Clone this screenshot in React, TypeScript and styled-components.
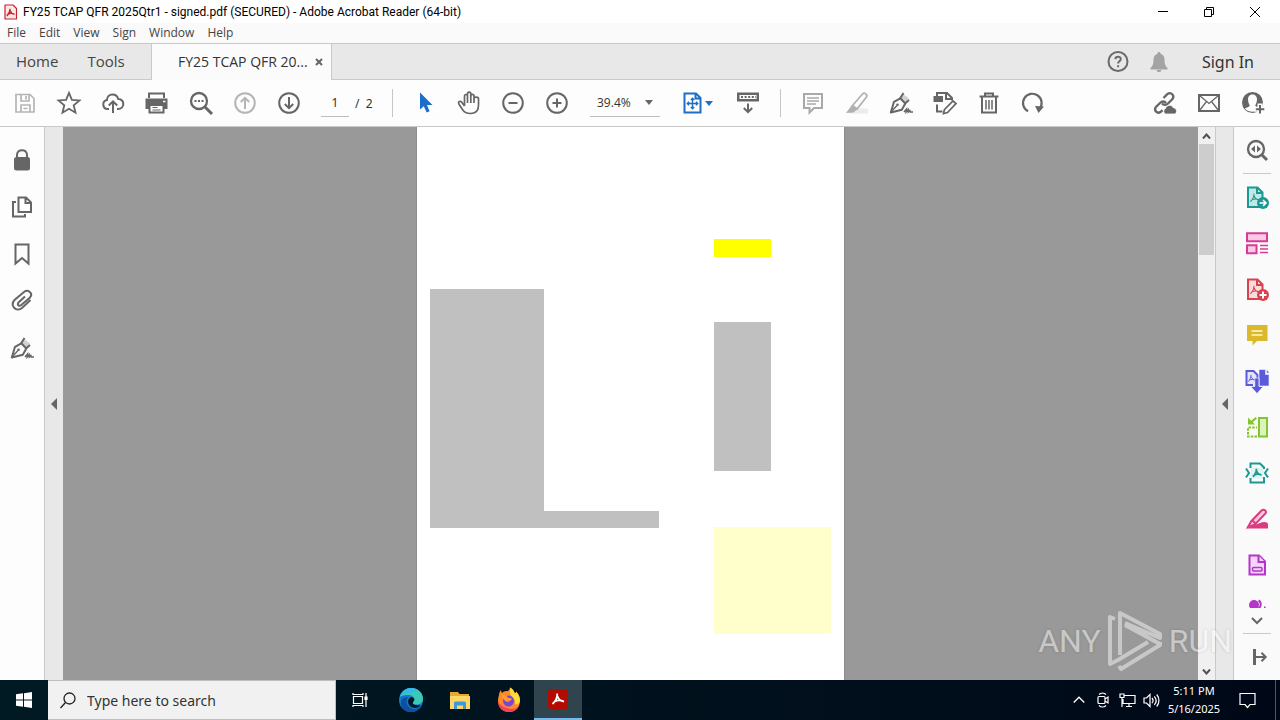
import React from "react";
import styled, { createGlobalStyle, css } from "styled-components";

const Global = createGlobalStyle`
  *, *::before, *::after { box-sizing: border-box; }
  html, body { margin: 0; height: 100%; overflow: hidden; }
  #root { height: 100%; }
  body { font-family: "Noto Sans", "Open Sans", sans-serif; font-size: 11px; color: #444; background: #fff; }
  button, input, select { font: inherit; color: inherit; margin: 0; padding: 0; border: 0; border-radius: 0; background: none; }
`;

const Shell = styled.div`
  display: flex;
  flex-direction: column;
  min-height: 100vh;
  height: 100%;
`;

const TitleBar = styled.header`
  display: flex;
  align-items: center;
  height: 23px;
  padding-left: 3px;
  background: #fff;
  color: #000;
`;
const WindowTitle = styled.h1`
  flex: 1;
  margin: 0 0 0 5px;
  font-family: Roboto, "Open Sans", sans-serif;
  font-size: 12px;
  font-weight: 400;
  line-height: 20px;
  white-space: nowrap;
`;
const WindowButton = styled.button`
  display: grid;
  place-items: center;
  width: 46px;
  height: 22px;
`;
const WindowButtons = styled.div`
  display: flex;
  margin-right: 2px;
`;

const MenuBar = styled.nav`
  display: flex;
  height: 21px;
  gap: 13px;
  padding-left: 7px;
  background: #fafafa;
  border-bottom: 1px solid #c9c9c9;
`;
const MenuItem = styled.button`
  font-family: "Open Sans", sans-serif;
  font-size: 12px;
  line-height: 20px;
`;

const TabBar = styled.div`
  display: flex;
  height: 36px;
  background: #e8e8e8;
  border-bottom: 1px solid #c9c9c9;
  font-family: "Open Sans", sans-serif;
  font-size: 14px;
`;
const HomeTabs = styled.div`
  display: flex;
  gap: 29px;
  width: 151px;
  padding-left: 16px;
`;
const PlainTab = styled.button`
  font-size: 15px;
  line-height: 35px;
`;
const DocTab = styled.div`
  display: flex;
  align-items: center;
  justify-content: space-between;
  width: 181px;
  height: 36px;
  padding: 0 8px 1px 26px;
  background: #fbfbfb;
  border: solid #c9c9c9;
  border-width: 0 1px;
  color: #333;
`;
const TabClose = styled.button`
  display: grid;
  place-items: center;
`;
const Account = styled.div`
  display: flex;
  align-items: center;
  gap: 18px;
  margin-left: auto;
  padding-right: 26px;
  color: #6a6a6a;
`;
const SignIn = styled.button`
  margin-left: 16px;
  color: #333;
  font-family: "Noto Sans", sans-serif;
  font-size: 16px;
`;

const Toolbar = styled.div`
  display: flex;
  align-items: center;
  height: 47px;
  padding: 0 5px 0 3px;
  background: #fdfdfd;
  border-bottom: 1px solid #c9c9c9;
  color: #666;
`;
const ToolGroup = styled.div<{ $end?: boolean }>`
  display: flex;
  align-items: center;
  ${(p) => p.$end && css`margin-left: auto;`}
`;
const ToolButton = styled.button<{ $tone?: string; $wide?: boolean }>`
  display: flex;
  align-items: center;
  justify-content: center;
  width: ${(p) => (p.$wide ? "52px" : "44px")};
  padding-right: ${(p) => (p.$wide ? "6px" : "0")};
  height: 44px;
  color: ${(p) => p.$tone ?? "#666"};
`;
const Divider = styled.span`
  width: 1px;
  height: 28px;
  margin: 0 10px;
  background: #c6c6c6;
`;
const PageField = styled.label`
  display: flex;
  align-items: center;
  gap: 6px;
  width: 61px;
  margin-left: 10px;
  color: #333;
  font-size: 12px;
`;
const PageInput = styled.input`
  width: 28px;
  height: 28px;
  text-align: center;
  border-bottom: 1px solid #bdbdbd;
`;
const ZoomField = styled.div`
  display: flex;
  align-items: center;
  width: 70px;
  height: 28px;
  margin: 0 14px 0 11px;
  border-bottom: 1px solid #bdbdbd;
  color: #333;
`;
const ZoomSelect = styled.select`
  flex: 1;
  height: 27px;
  padding-left: 7px;
  appearance: none;
  font-family: "Open Sans", sans-serif;
  font-size: 12px;
  outline: none;
`;

const Workspace = styled.main`
  display: flex;
  flex: 1;
  min-height: 0;
  position: relative;
`;
const LeftRail = styled.nav`
  display: flex;
  flex-direction: column;
  width: 45px;
  padding-top: 9px;
  background: #fdfdfd;
  border-right: 1px solid #c9c9c9;
`;
const LeftButton = styled.button`
  display: grid;
  place-items: center;
  height: 47px;
  color: #666;
`;
const Collapse = styled.button<{ $right?: boolean }>`
  display: grid;
  place-items: center;
  width: ${(p) => (p.$right ? "19px" : "18px")};
  background: #e8e8e8;
  ${(p) => p.$right && css`border: solid #c9c9c9; border-width: 0 1px;`}
`;
const Viewer = styled.section`
  flex: 1;
  display: flex;
  justify-content: center;
  overflow: hidden;
  background: #999;
`;
const Page = styled.article`
  display: flex;
  justify-content: space-between;
  width: 427px;
  padding: 0 13px;
  background: #fff;
  outline: 1px solid #8d8d8d;
`;
const FieldColumn = styled.div<{ $top: number }>`
  display: flex;
  flex-direction: column;
  padding-top: ${(p) => p.$top}px;
`;
const Field = styled.div<{ $w: number; $h: number; $fill: string; $gap?: number }>`
  width: ${(p) => p.$w}px;
  height: ${(p) => p.$h}px;
  margin-top: ${(p) => p.$gap ?? 0}px;
  background: ${(p) => p.$fill};
`;
const ScrollBar = styled.div`
  display: flex;
  flex-direction: column;
  width: 17px;
  background: #f0f0f0;
`;
const ScrollButton = styled.button<{ $end?: boolean }>`
  display: grid;
  place-items: center;
  height: 17px;
  color: #505050;
  ${(p) => p.$end && css`margin-top: auto;`}
`;
const ScrollThumb = styled.div`
  width: 15px;
  height: 111px;
  margin-left: 1px;
  background: #cdcdcd;
`;
const RightRail = styled.nav`
  display: flex;
  flex-direction: column;
  align-items: center;
  width: 46px;
  background: #fafafa;
  color: #666;
`;
const RightButton = styled.button<{ $h?: number }>`
  display: flex;
  align-items: flex-start;
  justify-content: center;
  width: 46px;
  height: ${(p) => p.$h ?? 46}px;
  padding-top: ${(p) => (p.$h ? 0 : 9)}px;
  overflow: hidden;
  flex: none;
`;
const RailLine = styled.span`
  width: 28px;
  height: 1px;
  background: #c9c9c9;
`;

const Watermark = styled.div`
  position: absolute;
  right: 48px;
  bottom: 8px;
  display: flex;
  align-items: center;
  gap: 6px;
  pointer-events: none;
  color: #fff;
  opacity: 0.46;
  font-family: Roboto, sans-serif;
  font-size: 32px;
  font-weight: 400;
  line-height: 62px;
  text-shadow: 0 0 3px rgba(0, 0, 0, 0.35);
`;

const TaskBar = styled.footer`
  display: flex;
  height: 40px;
  background: linear-gradient(90deg, #001a24, #00101c 60%, #000818);
  color: #fff;
`;
const TaskButton = styled.button<{ $active?: boolean; $gap?: number }>`
  display: grid;
  place-items: center;
  width: 48px;
  height: 40px;
  margin-right: ${(p) => p.$gap ?? 0}px;
  ${(p) => p.$active && css`background: #2f444c; border-bottom: 2px solid #76b9ed;`}
`;
const Search = styled.label`
  display: flex;
  align-items: center;
  gap: 11px;
  width: 288px;
  padding-left: 12px;
  background: #f1f1f1;
  border: 1px solid #bfbfbf;
  border-left: 0;
  color: #222;
`;
const SearchInput = styled.input`
  flex: 1;
  min-width: 0;
  font-size: 14px;
  outline: none;
  &::placeholder { color: #333; opacity: 1; }
`;
const Tray = styled.div`
  display: flex;
  margin-left: auto;
`;
const TrayButton = styled.button<{ $w?: number }>`
  display: grid;
  place-items: center;
  width: ${(p) => p.$w ?? 24}px;
  padding-right: ${(p) => (p.$w ? "6px" : "0")};
`;
const Clock = styled.time`
  width: 62px;
  text-align: center;
  font-size: 11px;
  line-height: 18px;
  padding-top: 2px;
`;
const ShowDesktop = styled.button`
  width: 5px;
  border-left: 1px solid #4c5964;
`;

type IconProps = { children: React.ReactNode; size?: number; box?: string };
const Icon = ({ children, size = 28, box }: IconProps) => (
  <svg width={size} height={size} viewBox={box ?? `0 0 ${size} ${size}`} fill="none" stroke="currentColor" strokeWidth="2" aria-hidden="true">
    {children}
  </svg>
);

const Swirl = ({ x, y, s = 1, w = 1.2 }: { x: number; y: number; s?: number; w?: number }) => (
  <path
    transform={`translate(${x} ${y}) scale(${s})`}
    d="M-.6-4.600C-.6-1.500-1.800 1.800-4.600 4.200M-.5-2.500C.3 0 2.200 1.800 5 2.200M-3 2C-.5 1 2.500.8 5 2.200"
    strokeWidth={w}
  />
);

const Nib = () => (
  <>
    <path d="M15.500 4.500l6.500 5-3.500 4.500-5-5z" fill="#d2d2d2" stroke="none" />
    <path d="M3.800 23.500L7 12.800l6.300-3.500 5 5.200-3.500 6.300z" strokeLinejoin="round" />
    <path d="M4 23l6-6.500" strokeWidth="1.400" />
    <circle cx="10.500" cy="15.800" r="1.300" fill="currentColor" stroke="none" />
    <path d="M13 9.500l3.500-5.500M18 14.500l4-3.500" />
    <path d="M17 23l2.500-3-.3 3 2-2.300.1 2.300 1.500-1.600.4 1.600H26" strokeWidth="1.500" />
  </>
);

const DownCaret = () => (
  <svg width="8" height="5" viewBox="0 0 8 5" aria-hidden="true"><path d="M0 0h8L4 5z" fill="currentColor" /></svg>
);

const Tip = ({ label, children, ...rest }: { label: string; children: React.ReactNode; $tone?: string; $wide?: boolean }) => (
  <ToolButton aria-label={label} {...rest}>{children}</ToolButton>
);

const pageShape = "M5 4.500h9.500l5 5V24H5z";

export default function App() {
  return (
    <Shell>
      <Global />
      <TitleBar>
        <svg width="15" height="16" viewBox="0 0 15 16" fill="none" aria-hidden="true">
          <path d="M2 1h8l3.500 3.500V15H2z" fill="#fde8e8" stroke="#c9242b" strokeWidth="1.200" strokeLinejoin="round" />
          <g stroke="#c9242b"><Swirl x={7.500} y={8.500} s={0.8} w={1.700} /></g>
        </svg>
        <WindowTitle>FY25 TCAP QFR 2025Qtr1 - signed.pdf (SECURED) - Adobe Acrobat Reader (64-bit)</WindowTitle>
        <WindowButtons>
          <WindowButton aria-label="Minimize">
            <svg width="10" height="10"><path d="M0 4.500h10" stroke="#000" /></svg>
          </WindowButton>
          <WindowButton aria-label="Restore">
            <svg width="10" height="10" fill="none" stroke="#000"><path d="M.5 2.500h7v7h-7zM2.500 2.500v-2h7v7h-2" /></svg>
          </WindowButton>
          <WindowButton aria-label="Close">
            <svg width="10" height="10" stroke="#000"><path d="M0 0l10 10M10 0L0 10" /></svg>
          </WindowButton>
        </WindowButtons>
      </TitleBar>

      <MenuBar>
        {["File", "Edit", "View", "Sign", "Window", "Help"].map((m) => <MenuItem key={m}>{m}</MenuItem>)}
      </MenuBar>

      <TabBar>
        <HomeTabs>
          <PlainTab>Home</PlainTab>
          <PlainTab>Tools</PlainTab>
        </HomeTabs>
        <DocTab>
          FY25 TCAP QFR 20...
          <TabClose aria-label="Close tab">
            <svg width="8" height="8" stroke="#666" strokeWidth="2"><path d="M1 1l6 6M7 1L1 7" /></svg>
          </TabClose>
        </DocTab>
        <Account>
          <TabClose aria-label="Help">
            <Icon>
              <circle cx="14" cy="13.500" r="9.500" />
              <path d="M11.300 11.100c.2-3.300 5.600-3.200 5.500 0 0 2-2.700 2.200-2.700 4.300M14.100 17.300v2" />
            </Icon>
          </TabClose>
          <TabClose aria-label="Notifications">
            <svg width="18" height="22" viewBox="0 0 18 22" fill="#a3a3a3" aria-hidden="true">
              <path d="M9 1c1 0 1.500.6 1.500 1.700C13.500 3.500 14.500 6 14.500 9c0 4 .8 6 3 8v1.500H.5V17c2.200-2 3-4 3-8 0-3 1-5.500 4-6.300C7.500 1.600 8 1 9 1zM6.500 19h5c-.3 1.400-1.200 2-2.500 2s-2.200-.6-2.500-2z" />
            </svg>
          </TabClose>
          <SignIn>Sign In</SignIn>
        </Account>
      </TabBar>

      <Toolbar>
        <ToolGroup>
          <Tip label="Save" $tone="#b5b5b5">
            <Icon><path d="M5 5.500h14l4 4V23H5zM10 5.500V12h8V5.500M10 23v-7h9v7M15 7v3.500M12.500 19.500h4" strokeWidth="1.700" /></Icon>
          </Tip>
          <Tip label="Star">
            <Icon><path d="M14 3.800l2.900 7 7.600.6-5.800 4.900 1.800 7.400-6.500-4-6.500 4 1.800-7.400-5.800-4.900 7.600-.6z" strokeWidth="1.800" /></Icon>
          </Tip>
          <Tip label="Upload">
            <Icon><path d="M10 20H8.500a4.500 4.500 0 0 1-.6-8.900C8 7.500 10.500 5.500 13.500 5.500c3 0 5 1.800 5.600 4.400 3.200.2 5.200 2.200 5.200 5 0 3-2.200 5.100-5.200 5.100H18M14 24V12.500M9.800 16.500l4.200-4.200 4.200 4.200" /></Icon>
          </Tip>
          <Tip label="Print">
            <Icon>
              <path d="M6 9V4.500h15V9" />
              <path d="M2.500 9.500h22V20h-22z" fill="currentColor" stroke="none" />
              <path d="M6.500 16h14v7.500h-14z" fill="#fdfdfd" />
              <path d="M9.500 18.500h5M9.500 21h8" strokeWidth="1.200" />
              <path d="M20 12.500h2.500" stroke="#fdfdfd" strokeWidth="1.500" />
            </Icon>
          </Tip>
          <Tip label="Find">
            <Icon>
              <circle cx="12" cy="12" r="8" strokeWidth="2.300" /><path d="M18 18l7 7" strokeWidth="3" />
              <path d="M7.500 12h2M11 12h2M14.500 12h2" />
            </Icon>
          </Tip>
          <Tip label="Previous page" $tone="#b5b5b5">
            <Icon><circle cx="14" cy="14" r="9.800" /><path d="M14 20V9M9.800 13L14 8.800l4.200 4.200" /></Icon>
          </Tip>
          <Tip label="Next page">
            <Icon><circle cx="14" cy="14" r="9.800" /><path d="M14 8v11M9.800 15l4.200 4.200 4.200-4.200" /></Icon>
          </Tip>
        </ToolGroup>
        <PageField>
          <PageInput aria-label="Page number" defaultValue="1" />
          <span>/&nbsp; 2</span>
        </PageField>
        <Divider />
        <ToolGroup>
          <Tip label="Select" $tone="#1b6fc8">
            <Icon><path d="M9 3.500V20.500l3.800-3.300 2.800 6.300 3-1.300-2.600-6.200h5.500z" fill="currentColor" stroke="none" /></Icon>
          </Tip>
          <Tip label="Pan">
            <Icon>
              <path d="M9.500 17V7.300c0-2.400 3-2.400 3 0V5c0-2.400 3.300-2.400 3.300 0v2c0-2.300 3.200-2.300 3.200 0v2.600c0-2 4.300-2 4.500 0 0 7 1.500 14.900-8.500 14.900-6.500 0-7.500-4-11.200-9.800-1-2 1.500-3.200 3-1.500l2.700 3.800M12.500 7.300V14M15.800 6v8M19 7.500V14" strokeWidth="1.700" />
            </Icon>
          </Tip>
          <Tip label="Zoom out"><Icon><circle cx="14" cy="14" r="9.800" /><path d="M9.500 14h9" /></Icon></Tip>
          <Tip label="Zoom in"><Icon><circle cx="14" cy="14" r="9.800" /><path d="M9.500 14h9M14 9.500v9" /></Icon></Tip>
        </ToolGroup>
        <ZoomField>
          <ZoomSelect aria-label="Zoom level" defaultValue="39.4%"><option>39.4%</option></ZoomSelect>
          <svg width="20" height="5" viewBox="0 0 20 5" fill="#666" aria-hidden="true"><path d="M5 0h8L9 5z" /></svg>
        </ZoomField>
        <ToolGroup>
          <Tip label="Fit page" $tone="#1b6fc8" $wide>
            <Icon size={24} box="2 2 24 24">
              <path d="M5.500 4.500H17L21.500 9v14.500h-16zM16.500 4.500v5h5" />
              <path d="M13.500 9.500v10M8.500 14.500h10M11.800 11l1.700-1.700 1.700 1.700M11.800 18l1.700 1.700 1.700-1.700M10 12.800l-1.700 1.700 1.700 1.700M17 12.800l1.700 1.700-1.700 1.700" strokeWidth="1.400" />
            </Icon>
            <DownCaret />
          </Tip>
          <Tip label="Scrolling mode">
            <Icon>
              <path d="M3 3.500h22v9H3z" fill="currentColor" stroke="none" />
              <path d="M5.500 6h17v4h-17z" fill="#fdfdfd" stroke="none" />
              <path d="M7 8h15" strokeDasharray="2 1.600" />
              <path d="M14 14.500v9M9.800 19l4.200 4.200 4.200-4.200" />
            </Icon>
          </Tip>
        </ToolGroup>
        <Divider />
        <ToolGroup>
          <Tip label="Comment" $tone="#a9a9a9">
            <Icon><path d="M5 5h18v14h-8l-4.500 4.500V19H5z" /><path d="M8 9h12M8 12h12M8 15h9" strokeWidth="1.300" /></Icon>
          </Tip>
          <Tip label="Highlight" $tone="#b0b0b0">
            <Icon>
              <path d="M10 19.500h15v5H6z" fill="#ececec" stroke="none" />
              <path d="M9.500 16.500L19.500 5c2-2 5.500.5 4 3L14 20z" strokeWidth="1.700" />
              <path d="M9 16l5 4.500-3.500 3-7.500.5z" fill="currentColor" stroke="none" />
            </Icon>
          </Tip>
          <Tip label="Sign"><Icon><Nib /></Icon></Tip>
          <Tip label="Edit form">
            <Icon>
              <path d="M2.500 7h9.500v6H2.500z" fill="currentColor" stroke="none" />
              <path d="M6 7V4h10l5 5v2.500M15 4v6h6M6 15.500v7h5.500" />
              <path d="M13.500 20.500l8.500-8.500 3 2.500-8.500 9-4 1z" strokeWidth="1.700" />
            </Icon>
          </Tip>
          <Tip label="Delete">
            <Icon><path d="M4.500 7.500h19M10 7V4.500h8V7M7 8v15.500h14V8" /><path d="M11 11v9.500M14 11v9.500M17 11v9.500" strokeWidth="1.500" /></Icon>
          </Tip>
          <Tip label="Rotate">
            <Icon><path d="M9 22.300a9.300 9.300 0 1 1 11.500-2.300" strokeWidth="2.200" /><path d="M16 17l9 .5-5.500 6.500z" fill="currentColor" stroke="none" /></Icon>
          </Tip>
        </ToolGroup>
        <ToolGroup $end>
          <Tip label="Share link">
            <Icon>
              <path d="M12.500 9l4-4c3.500-2.500 7.500 1.500 5 5l-4.500 4.500c-2 2-4.500 1.500-6 0M15 14c-1.500-2-4-2-6 0l-4.300 4.300c-2 3.200 1.500 6.800 4.800 4.800l2-2" strokeWidth="2.300" />
              <path d="M14.500 25a3 3 0 0 1 0-5.500c1-4 6.500-4 7.500-1 3.500 0 5 5.500 1.500 6.500z" fill="currentColor" stroke="#fdfdfd" strokeWidth=".8" />
            </Icon>
          </Tip>
          <Tip label="Email">
            <Icon><path d="M4 6h20v16H4z" /><path d="M4.500 6.500L14 14.500l9.500-8M4.500 21.500l7-9M23.500 21.500l-7-9" strokeWidth="1.300" /></Icon>
          </Tip>
          <Tip label="Invite people">
            <Icon>
              <circle cx="13.500" cy="13.500" r="10.500" fill="currentColor" stroke="none" />
              <path d="M5.800 19.800c1.700-1.800 4.700-1.500 4.900-3.300 0-1-1.700-2.500-1.700-6 0-3.500 2-5 4.500-5s4.500 1.500 4.500 5c0 3.500-1.700 5-1.700 6 .2 1.800 3 1.500 4.900 3.300-4 4-11.500 4-15.400 0z" fill="#fdfdfd" stroke="none" />
              <path d="M21 14.500v10.500M15.500 20.200H26" stroke="#fdfdfd" strokeWidth="5" />
              <path d="M21 16v8.500M16.800 20.200h8.500" />
            </Icon>
          </Tip>
        </ToolGroup>
      </Toolbar>

      <Workspace>
        <LeftRail>
          <LeftButton aria-label="Security">
            <Icon><path d="M9 13V9c0-6.500 10-6.500 10 0v4" /><rect x="6" y="11" width="16" height="13.500" rx="2.500" fill="currentColor" stroke="none" /></Icon>
          </LeftButton>
          <LeftButton aria-label="Pages">
            <Icon><path d="M10.500 4.500h7.500l5 5V19H10.500zM17.500 4.500V10H23M8 9H5v14.500h12V21" /></Icon>
          </LeftButton>
          <LeftButton aria-label="Bookmarks">
            <Icon><path d="M7.500 4.500h13v19L14 18l-6.500 5.500z" /></Icon>
          </LeftButton>
          <LeftButton aria-label="Attachments">
            <Icon><path d="M17 9.500L10.500 15.500c-1.800 2.500.8 4.300 2.800 2.500l8.700-7.500c3.500-4.500-2-8.500-6-5.500L6.500 13C1.500 19 8.500 25.500 14 21l8.500-8" /></Icon>
          </LeftButton>
          <LeftButton aria-label="Signatures"><Icon><Nib /></Icon></LeftButton>
        </LeftRail>
        <Collapse aria-label="Expand panel">
          <svg width="6" height="12"><path d="M6 0v12L0 6z" fill="#666" /></svg>
        </Collapse>
        <Viewer>
          <Page>
            <FieldColumn $top={162}>
              <Field $w={114} $h={222} $fill="#c0c0c0" />
              <Field $w={229} $h={17} $fill="#c0c0c0" />
            </FieldColumn>
            <FieldColumn $top={112}>
              <Field $w={57} $h={18} $fill="#ffff00" />
              <Field $w={57} $h={149} $fill="#c0c0c0" $gap={65} />
              <Field $w={117} $h={107} $fill="#ffffcc" $gap={56} />
            </FieldColumn>
          </Page>
        </Viewer>
        <ScrollBar>
          <ScrollButton aria-label="Scroll up">
            <svg width="9" height="6" fill="none" stroke="currentColor" strokeWidth="2"><path d="M1 5.500l3.500-4 3.500 4" /></svg>
          </ScrollButton>
          <ScrollThumb />
          <ScrollButton aria-label="Scroll down" $end>
            <svg width="9" height="6" fill="none" stroke="currentColor" strokeWidth="2"><path d="M1 .5l3.500 4 3.500-4" /></svg>
          </ScrollButton>
        </ScrollBar>
        <Collapse $right aria-label="Collapse tools">
          <svg width="6" height="12"><path d="M6 0v12L0 6z" fill="#666" /></svg>
        </Collapse>
        <RightRail>
          <RightButton aria-label="Search tools">
            <Icon>
              <circle cx="13" cy="13" r="8" strokeWidth="2.300" /><path d="M19 19l5 5" strokeWidth="3" />
              <path d="M12 9.500v7L8 13zM14 9.500v7l4-3.500z" fill="currentColor" stroke="none" />
            </Icon>
          </RightButton>
          <RailLine />
          <RightButton aria-label="Export PDF">
            <Icon><g stroke="#1c9892"><path d={pageShape} fill="#c3e9e7" /><path d="M14 4.500V10h5.500" /><Swirl x={11.500} y={15} s={0.9} /></g>
              <circle cx="20" cy="20" r="6" fill="#1c9892" stroke="none" /><path d="M16.500 20h6M20 17l3 3-3 3" stroke="#fff" strokeWidth="1.600" /></Icon>
          </RightButton>
          <RightButton aria-label="Organize pages">
            <Icon><g stroke="#d63c96" fill="#f9cbe5"><path d="M4 4.300h20v8H4zM4 16.300h9.500v8H4z" /><path d="M17 16.500h8M17 20h8M17 23.500h8" strokeWidth="1.300" /></g></Icon>
          </RightButton>
          <RightButton aria-label="Create PDF">
            <Icon><g stroke="#d8414f"><path d={pageShape} fill="#fbdcdc" /><path d="M14 4.500V10h5.500" /><Swirl x={11.500} y={15} s={0.9} /></g>
              <circle cx="20" cy="20" r="6" fill="#d8414f" stroke="none" /><path d="M16.500 20h7M20 16.500v7" stroke="#fff" /></Icon>
          </RightButton>
          <RightButton aria-label="Comment">
            <Icon><path d="M4 4h20.500v16H14l-4.500 4.500V20H4z" fill="#dcb92b" stroke="none" /><path d="M8.500 10h11M8.500 14h11" stroke="#fff8d0" strokeWidth="1.700" /></Icon>
          </RightButton>
          <RightButton aria-label="Combine files">
            <Icon><g stroke="#5a5bdc"><path d="M10 18H3.500V4h7l4 4v4" fill="#e4e4fb" /><Swirl x={8.500} y={11.500} s={0.8} /></g>
              <path d="M16 2.500h6.500V7.500H26V19H16zM23.500 2.500L26.500 6h-3zM11.800 11h4.400v8.500h4l-6.200 7-6.200-7h4z" fill="#5a5bdc" stroke="#fafafa" strokeWidth=".6" /></Icon>
          </RightButton>
          <RightButton aria-label="Compare files">
            <Icon><g stroke="#84c52f"><path d="M16 5h8v18.500h-8z" fill="#dcf3bd" /><path d="M14 23.500H5v-9h9" strokeDasharray="2.500 1.200" /></g>
              <path d="M5 4.500v7h7L9.800 9.200 14 5.500 12.700 4 8.200 7.700z" fill="#84c52f" stroke="none" /></Icon>
          </RightButton>
          <RightButton aria-label="Compress PDF">
            <Icon><g stroke="#1c9892"><path d="M8 8.500h12.500v11H8z" fill="#dff3f2" stroke="none" /><path d="M7.500 9V4.500h9.500l4 4V10M7.500 19v4.500H21V18" /><path d="M3 9.500L6 14 3 18.500M25 9.500L22 14l3 4.500" /><Swirl x={14} y={14} s={0.9} w={2} /></g></Icon>
          </RightButton>
          <RightButton aria-label="Redact">
            <Icon><path d="M3 23.500L17 18c3-1.500 8-1.500 8 1.500v4z" fill="#dc3a7e" stroke="none" /><path d="M8 16.500l10.500-11c2.500-2 5.500.5 4 3L12 19.500l-7 2.500z" fill="#fbc9de" stroke="#dc3a7e" /><path d="M9 15l4 4" stroke="#dc3a7e" /></Icon>
          </RightButton>
          <RightButton aria-label="Prepare form">
            <Icon><g stroke="#b436c8" fill="#f6d5fb"><path d="M6.500 4.500H16l6 6v13H6.500z" /><path d="M15.500 4.500V11H22" /><rect x="9.500" y="16.500" width="9.500" height="3.500" rx="1" strokeWidth="1.500" /></g></Icon>
          </RightButton>
          <RightButton $h={20} aria-label="More tools">
            <Icon size={20}><circle cx="7" cy="17" r="5" fill="#b436c8" stroke="none" /><path d="M11.500 12.500c3 1.500 3 6 0 8" stroke="#b436c8" /><path d="M17 19.500h1.500" stroke="#b436c8" /></Icon>
          </RightButton>
          <RightButton $h={25} aria-label="Scroll tools down">
            <svg width="12" height="25" fill="none" stroke="currentColor" strokeWidth="2"><path d="M1 10l5 5 5-5" /></svg>
          </RightButton>
          <RailLine />
          <RightButton aria-label="Expand tools">
            <Icon><path d="M11.500 6v16" strokeWidth="3" /><path d="M13 14h9.500M18.500 9.800l4.200 4.200-4.200 4.200" /></Icon>
          </RightButton>
        </RightRail>
        <Watermark>
          <span>ANY</span>
          <svg width="56" height="62" viewBox="0 0 56 62" fill="none" stroke="currentColor" strokeWidth="4" strokeLinejoin="round" aria-hidden="true">
            <path d="M8 9L3 7v47l8-4 30-18M13 45V3l40 21v4L18 13M53 32v3L14 59l-2-3M18 15l35 19" />
          </svg>
          <span>RUN</span>
        </Watermark>
      </Workspace>

      <TaskBar>
        <TaskButton aria-label="Start">
          <svg width="16" height="16" fill="#fff"><path d="M0 2.300L7 1.300V7.500H0zM8 1.200L16 0v7.500H8zM0 8.500h7v6.200l-7-1zM8 8.500h8V16l-8-1.200z" /></svg>
        </TaskButton>
        <Search>
          <svg width="16" height="17" fill="none" stroke="#222" strokeWidth="1.300"><circle cx="9.500" cy="6.500" r="5.500" /><path d="M5.500 10.500L.5 16" /></svg>
          <SearchInput aria-label="Search" placeholder="Type here to search" />
        </Search>
        <TaskButton aria-label="Task view" $gap={3}>
          <svg width="16" height="16" fill="none" stroke="#fff" strokeWidth="1.200"><path d="M1.500 4.500h9v7h-9zM1 1v1.500h10V1M1 15v-1.500h10V15M14 1v4M14 8v7" /><path d="M13 5h2v2.500h-2z" fill="#fff" /></svg>
        </TaskButton>
        <TaskButton aria-label="Edge" $gap={1}>
          <svg width="26" height="26" viewBox="0 0 26 26">
            <circle cx="13" cy="13" r="12" fill="#1677c9" />
            <path d="M2 10C4 3 9 1 13 1c7 0 12 5 12 10.500 0 4-3 6-6.500 6-3 0-4.500-1.500-3.500-2.500 1-1 1.500-2 1.300-3C16 9 12 7.500 8.500 8 5 8.300 3 9 2 10z" fill="#3cc8b4" />
            <path d="M2 10C4 3 9 1 13 1c4 0 5 1 7 2-3 4-14 1-18 7z" fill="#35b9e8" />
            <path d="M10 10c-3 5-1 10 4.500 12 3 .8 6-.5 7.500-2-2 4-6 5-9 5C6 25 2 20 3 14c1-3 4-4 7-4z" fill="#0f4fa0" />
            <path d="M16.300 12c-1.500-3-5-2-6 1-1 4 2 8 7 8 3 0 5-2 5-3-2 .5-8 .5-7.500-2.500.7-1 1.700-2 1.500-3.500z" fill="#001822" />
          </svg>
        </TaskButton>
        <TaskButton aria-label="File Explorer" $gap={1}>
          <svg width="24" height="24" viewBox="0 0 24 24"><path d="M2 4h8l1.500 2H21v15H2z" fill="#e8a82c" /><path d="M2 8h20v13H2z" fill="#ffd668" /><path d="M6 21v-6c0-1 1-1.500 2-1.500h8c1 0 2 .5 2 1.500v6h-3v-3.500H9V21z" fill="#3f98d8" /></svg>
        </TaskButton>
        <TaskButton aria-label="Firefox" $gap={1}>
          <svg width="26" height="26" viewBox="0 0 26 26">
            <path d="M3 8c0-2 1-4 2-5 0 1 .5 2 1 3 2-2 4-2 6-2 1-1 2-2 2-3.500 3 1.500 4 4 5 6 1-.5 1-1.500 1-2 3 3 4 6 4 9.500C24 20.500 19 25 13 25S2 20.500 2 14c0-2 .3-4 1-6z" fill="#ff8a25" />
            <path d="M14 .5c3 1.500 4 4 5 6 1-.5 1-1.500 1-2 3 3 4 6 4 9.500-1 3-3 4-5 3 1-6-5-8-5-11 0-2 .5-4 0-5.500z" fill="#ffdb3a" />
            <path d="M2 14c0 7 5 11 11 11 4 0 8-2 10-6-3 3-7 4-12 2-4-1-8-4-9-7z" fill="#f7415c" />
            <circle cx="12.500" cy="14" r="5.500" fill="#7b45d8" />
            <path d="M6 8c3-1 5 1 6 3 2 0 3 0 4 1-1 2-3 1.500-4 3-2-.5-5-2-6-7z" fill="#ff9d2e" />
          </svg>
        </TaskButton>
        <TaskButton aria-label="Adobe Acrobat" $active>
          <svg width="22" height="22" viewBox="0 0 22 22" fill="none" stroke="#fff"><rect x="1" y="1" width="20" height="20" rx="3" fill="#b30b00" stroke="none" /><Swirl x={11} y={11} s={1.200} w={1.500} /></svg>
        </TaskButton>
        <Tray>
          <TrayButton aria-label="Hidden icons">
            <svg width="12" height="8" fill="none" stroke="#fff" strokeWidth="1.300"><path d="M.7 6.500L6 1.200l5.300 5.300" /></svg>
          </TrayButton>
          <TrayButton aria-label="Camera">
            <svg width="14" height="18" fill="none" stroke="#fff" strokeWidth="1.200"><rect x="2" y="5.500" width="7" height="7" rx="1" /><path d="M9 8l3-2v6l-3-2M3 3.500c2-2 5-2 7 0M3 14.500c2 2 5 2 7 0" /></svg>
          </TrayButton>
          <TrayButton aria-label="Network">
            <svg width="17" height="15" fill="none" stroke="#fff" strokeWidth="1.200"><path d="M5.500 2.500h10.500v8H4V6M1 1h4v3.500H1zM3 4.500V14M10 10.500V14M7 13.500h6" /></svg>
          </TrayButton>
          <TrayButton aria-label="Volume">
            <svg width="17" height="15" fill="none" stroke="#fff" strokeWidth="1.200"><path d="M1 5h2.500L7 1.500v12L3.500 10H1zM9 5c1.300 1.500 1.300 3.500 0 5M11.300 3.300c2.200 2.500 2.200 6 0 8.500M13.700 1.500c3 3.500 3 8.500 0 12" /></svg>
          </TrayButton>
          <Clock>5:11 PM<br />5/16/2025</Clock>
          <TrayButton aria-label="Action center" $w={50}>
            <svg width="17" height="17" fill="none" stroke="#fff" strokeWidth="1.200"><path d="M1 1.500h15v11h-5l-2.500 3-2.500-3H1z" /></svg>
          </TrayButton>
          <ShowDesktop aria-label="Show desktop" />
        </Tray>
      </TaskBar>
    </Shell>
  );
}
